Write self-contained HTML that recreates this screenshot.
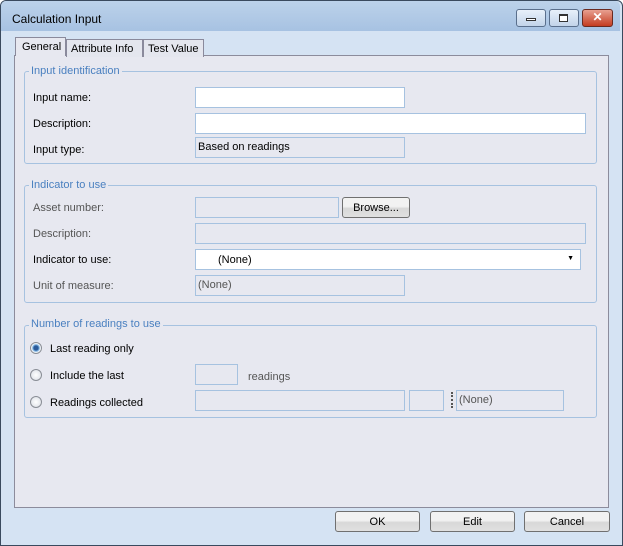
<!DOCTYPE html><html><head><style>
*{box-sizing:border-box}
body{margin:0;width:623px;height:546px;overflow:hidden;font-family:"Liberation Sans",sans-serif;font-size:11px;color:#000}
.a{position:absolute}
#win{left:0;top:0;width:623px;height:546px;background:#d5e3f3;border:1px solid #3a4a5e;border-radius:6px 6px 0 0}
#tb{left:1px;top:1px;width:619px;height:30px;background:linear-gradient(#bcd2ea,#a7c2e2);border-radius:5px 5px 0 0}
.wb{top:9px;height:18px;border:1px solid #5a6f8c;border-radius:3px;background:linear-gradient(#e8f0fa,#c2d4ea)}
.tab{height:18px;border:1px solid #8a8a9c;border-bottom:none;background:#e4e6ee;padding:3px 4px 0;font-size:11px}
#panel{left:14px;top:55px;width:595px;height:453px;border:1px solid #8c8c9c;background:#e7e8f0}
.g{border:1px solid #a6c2e0;border-radius:3px}
.gl{background:#e7e8f0;color:#4a80c0;padding:0 2px;font-size:11px}
.in{background:#fff;border:1px solid #a6c2e0;height:21px}
.dis{background:#e7e8f0;border:1px solid #a6c2e0;height:21px;color:#555;padding:4px 2px;font-size:11px}
.lb{font-size:11px}
.gr{color:#555}
.rad{width:12px;height:12px;border-radius:50%;border:1px solid #8a8e96;background:radial-gradient(#fff,#d8dce4)}
.btn{top:511px;height:21px;border:1px solid #707070;border-radius:3px;background:linear-gradient(#f2f2f2 45%,#d8d8d8 55%,#e0e0e0);text-align:center;padding-top:4px;font-size:11px}
</style></head><body>
<div id="win" class="a"></div>
<div id="tb" class="a"></div>
<div class="a" style="left:12px;top:12px;font-size:12px">Calculation Input</div>
<div class="a wb" style="left:516px;width:30px"><div class="a" style="left:9px;top:8px;width:10px;height:3px;border:1px solid #333;background:#fff"></div></div>
<div class="a wb" style="left:549px;width:30px"><div class="a" style="left:9px;top:4px;width:9px;height:8px;border:1px solid #333;border-top-width:2px;background:#fff"></div></div>
<div class="a wb" style="left:582px;width:31px;background:linear-gradient(#e8a090,#c43c20);border-color:#6a2a20;color:#fff;font-weight:bold;text-align:center;font-size:12px;line-height:15px">✕</div>
<div id="panel" class="a"></div>
<div class="a tab" style="left:66px;top:39px;width:77px">Attribute Info</div>
<div class="a tab" style="left:143px;top:39px;width:61px">Test Value</div>
<div class="a tab" style="left:15px;top:37px;width:51px;height:19px;background:#e7e8f0;padding-top:3px;padding-left:6px">General</div>

<div class="a g" style="left:24px;top:71px;width:573px;height:93px"></div>
<div class="a gl" style="left:29px;top:65px">Input identification</div>
<div class="a lb" style="left:33px;top:92px">Input name:</div>
<div class="a in" style="left:195px;top:87px;width:210px"></div>
<div class="a lb" style="left:33px;top:118px">Description:</div>
<div class="a in" style="left:195px;top:113px;width:391px"></div>
<div class="a lb" style="left:33px;top:144px">Input type:</div>
<div class="a dis" style="left:195px;top:137px;width:210px;color:#000;padding-top:3px">Based on readings</div>

<div class="a g" style="left:24px;top:185px;width:573px;height:118px"></div>
<div class="a gl" style="left:29px;top:179px">Indicator to use</div>
<div class="a lb gr" style="left:33px;top:202px">Asset number:</div>
<div class="a dis" style="left:195px;top:197px;width:144px"></div>
<div class="a btn" style="left:342px;top:197px;width:68px">Browse...</div>
<div class="a lb gr" style="left:33px;top:228px">Description:</div>
<div class="a dis" style="left:195px;top:223px;width:391px"></div>
<div class="a lb" style="left:33px;top:254px">Indicator to use:</div>
<div class="a in" style="left:195px;top:249px;width:386px;padding:4px 0 0 22px">(None)<span class="a" style="right:6px;top:5px;font-size:7px">▼</span></div>
<div class="a lb gr" style="left:33px;top:280px">Unit of measure:</div>
<div class="a dis" style="left:195px;top:275px;width:210px;padding-top:3px">(None)</div>

<div class="a g" style="left:24px;top:325px;width:573px;height:93px"></div>
<div class="a gl" style="left:29px;top:318px">Number of readings to use</div>
<div class="a rad" style="left:30px;top:342px;background:radial-gradient(#2a5a9a 30%,#7ab0e0 45%,#fff 65%,#d8dce4)"></div>
<div class="a lb" style="left:50px;top:343px">Last reading only</div>
<div class="a rad" style="left:30px;top:369px"></div>
<div class="a lb" style="left:50px;top:370px">Include the last</div>
<div class="a dis" style="left:195px;top:364px;width:43px"></div>
<div class="a lb gr" style="left:248px;top:371px">readings</div>
<div class="a rad" style="left:30px;top:396px"></div>
<div class="a lb" style="left:50px;top:397px">Readings collected</div>
<div class="a dis" style="left:195px;top:390px;width:210px"></div>
<div class="a dis" style="left:409px;top:390px;width:35px"></div>
<div class="a" style="left:451px;top:392px;width:2px;height:16px;border-left:2px dotted #555"></div>
<div class="a dis" style="left:456px;top:390px;width:108px;padding-top:3px">(None)</div>

<div class="a btn" style="left:335px;width:85px">OK</div>
<div class="a btn" style="left:430px;width:85px">Edit</div>
<div class="a btn" style="left:524px;width:86px">Cancel</div>
</body></html>
